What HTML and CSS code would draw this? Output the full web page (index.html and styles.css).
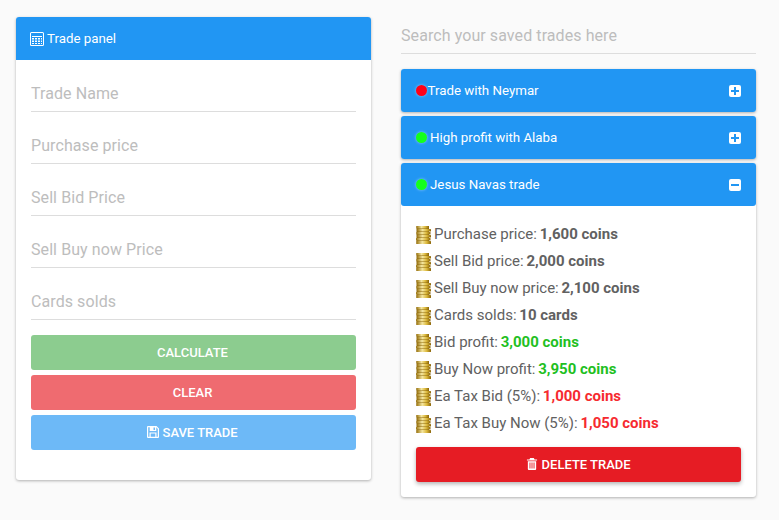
FILE: index.html
```html
<!DOCTYPE html>
<html lang="en">
<head>
    <meta charset="UTF-8">
    <meta name="viewport" content="width=device-width, initial-scale=1.0">
    <title>Trade Calculator</title>
    <link rel="stylesheet" href="styles.css">
</head>
<body>
    <svg class="defs" width="0" height="0">
        <defs>
            <linearGradient id="gold" x1="0" y1="0" x2="1" y2="0">
                <stop offset="0" stop-color="#9a7410"/>
                <stop offset="0.4" stop-color="#f4e6a0"/>
                <stop offset="0.7" stop-color="#dcb93c"/>
                <stop offset="1" stop-color="#8a6408"/>
            </linearGradient>
            <symbol id="coins" viewBox="0 0 15 18">
                <rect x="0.5" y="0" width="12.500" height="18" fill="#8f6a0c"/>
                <rect x="0.5" y="0" width="12.500" height="2.500" rx="0.5" fill="url(#gold)"/>
                <rect x="1" y="3" width="14" height="2.500" rx="0.5" fill="url(#gold)"/>
                <rect x="0.5" y="6" width="14" height="2.500" rx="0.5" fill="url(#gold)"/>
                <rect x="1" y="9" width="14" height="2.500" rx="0.5" fill="url(#gold)"/>
                <rect x="0" y="12" width="14.500" height="2.500" rx="0.5" fill="url(#gold)"/>
                <rect x="0.5" y="15" width="14.500" height="3" rx="0.5" fill="url(#gold)"/>
            </symbol>
        </defs>
    </svg>

    <div class="page">
        <!-- Left column: calculator -->
        <div class="card">
            <div class="card-header">
                <svg class="icon" viewBox="0 0 14 14">
                    <path fill="currentColor" fill-rule="evenodd" d="M1.500 0h11A1.500 1.500 0 0 1 14 1.500v11a1.500 1.500 0 0 1-1.500 1.500h-11A1.500 1.500 0 0 1 0 12.500v-11A1.500 1.500 0 0 1 1.500 0zM1.500 1a.5.5 0 0 0-.5.5v11a.5.5 0 0 0 .5.5h11a.5.5 0 0 0 .5-.5v-11a.5.5 0 0 0-.5-.5z"/>
                    <path fill="currentColor" d="M2 4h10v1H2zM2 6h2v1.500H2zM5 6h2v1.500H5zM8 6h2v1.500H8zM11 6h1v1.500h-1zM2 8.500h2V10H2zM5 8.500h2V10H5zM8 8.500h2V10H8zM11 8.500h1V10h-1zM2 11h2v1H2zM5 11h2v1H5zM8 11h2v1H8zM11 11h1v1h-1z"/>
                </svg>
                <span>Trade panel</span>
            </div>
            <div class="card-body">
                <input class="field" type="text" placeholder="Trade Name">
                <input class="field" type="text" placeholder="Purchase price">
                <input class="field" type="text" placeholder="Sell Bid Price">
                <input class="field" type="text" placeholder="Sell Buy now Price">
                <input class="field" type="text" placeholder="Cards solds">
                <div class="actions">
                    <button class="btn btn-green">CALCULATE</button>
                    <button class="btn btn-red">CLEAR</button>
                    <button class="btn btn-blue">
                        <svg class="icon-sm" viewBox="0 0 12 12">
                            <path fill="currentColor" fill-rule="evenodd" d="M1 0h8.500L12 2.500V11a1 1 0 0 1-1 1H1a1 1 0 0 1-1-1V1a1 1 0 0 1 1-1zM1.200 1.200v9.600h1.300V6.500h7v4.300h1.300V3L9.300 1.200V5H2.700V1.200zM3.700 7.500v3.300h4.600V7.500zM6.500 1.500h1.500V4H6.500z"/>
                        </svg>
                        SAVE TRADE
                    </button>
                </div>
            </div>
        </div>

        <!-- Right column: saved trades -->
        <div class="saved">
            <input class="field search" type="text" placeholder="Search your saved trades here">

            <div class="trade">
                <div class="trade-header">
                    <span class="dot dot-red"></span>
                    <span class="trade-name tight">Trade with Neymar</span>
                    <span class="toggle"><span class="bar-h"></span><span class="bar-v"></span></span>
                </div>
            </div>
            <div class="trade">
                <div class="trade-header">
                    <span class="dot dot-green"></span>
                    <span class="trade-name">High profit with Alaba</span>
                    <span class="toggle"><span class="bar-h"></span><span class="bar-v"></span></span>
                </div>
            </div>
            <div class="trade">
                <div class="trade-header">
                    <span class="dot dot-green"></span>
                    <span class="trade-name">Jesus Navas trade</span>
                    <span class="toggle"><span class="bar-h"></span></span>
                </div>
                <div class="trade-body">
                    <ul class="stats">
                        <li><svg class="coin"><use href="#coins"/></svg>Purchase price: <b>1,600 coins</b></li>
                        <li><svg class="coin"><use href="#coins"/></svg>Sell Bid price: <b>2,000 coins</b></li>
                        <li><svg class="coin"><use href="#coins"/></svg>Sell Buy now price: <b>2,100 coins</b></li>
                        <li><svg class="coin"><use href="#coins"/></svg>Cards solds: <b>10 cards</b></li>
                        <li><svg class="coin"><use href="#coins"/></svg>Bid profit: <b class="pos">3,000 coins</b></li>
                        <li><svg class="coin"><use href="#coins"/></svg>Buy Now profit: <b class="pos">3,950 coins</b></li>
                        <li><svg class="coin"><use href="#coins"/></svg>Ea Tax Bid (5%): <b class="neg">1,000 coins</b></li>
                        <li><svg class="coin"><use href="#coins"/></svg>Ea Tax Buy Now (5%): <b class="neg">1,050 coins</b></li>
                    </ul>
                    <button class="btn btn-delete">
                        <svg class="icon-sm" viewBox="0 0 11 13">
                            <path fill="currentColor" fill-rule="evenodd" d="M3.500 0h4l.8 1.500H11v1.200H0V1.500h2.700zM1 3.500h9V12a1 1 0 0 1-1 1H2a1 1 0 0 1-1-1zM2.800 5v6.500h1V5zM5 5v6.500h1V5zM7.200 5v6.500h1V5z"/>
                        </svg>
                        DELETE TRADE
                    </button>
                </div>
            </div>
        </div>
    </div>
</body>
</html>
```

FILE: styles.css
```css
body {
    margin: 0;
    background-color: #fafafa;
    font-family: Roboto, sans-serif;
    color: #616161;
}

.defs {
    display: block;
    height: 0;
}

.page {
    display: grid;
    grid-template-columns: 355px 355px;
    column-gap: 30px;
    align-items: start;
    padding: 17px 16px;
}

.card {
    background-color: white;
    border-radius: 3px;
    box-shadow: 0 1px 3px rgba(0, 0, 0, 0.3);
}

.card-header {
    display: flex;
    align-items: center;
    gap: 3px;
    height: 43px;
    padding: 0 14px;
    background-color: #2196f3;
    border-radius: 3px 3px 0 0;
    color: white;
    font-size: 13.3px;
}

.icon {
    width: 14px;
    height: 14px;
}

.icon-sm {
    width: 12px;
    height: 12px;
    vertical-align: -1px;
}

.card-body {
    padding: 15px 15px 30px;
}

.field {
    display: block;
    box-sizing: border-box;
    width: 100%;
    height: 37px;
    margin-bottom: 15px;
    padding: 0;
    border: none;
    border-bottom: 1px solid #ddd;
    background: none;
    font-family: Roboto, sans-serif;
    font-size: 16px;
    letter-spacing: 0.08px;
    outline: none;
}

.field::placeholder {
    color: #bdbdbd;
    opacity: 1;
}

.actions {
    display: flex;
    flex-direction: column;
    gap: 5px;
}

.btn {
    display: block;
    width: 100%;
    height: 35px;
    padding: 0 2px 0 0;
    border: none;
    border-radius: 3px;
    color: white;
    font-family: Roboto, sans-serif;
    font-size: 13px;
    font-weight: 500;
}

.btn-green {
    background-color: #8ccc8f;
}

.btn-red {
    background-color: #ef6b70;
}

.btn-blue {
    background-color: #6db9f7;
}

.saved {
    display: flex;
    flex-direction: column;
    gap: 4px;
}

.search {
    margin-bottom: 11px;
}

.trade {
    border-radius: 3px;
    background-color: white;
    box-shadow: 0 1px 3px rgba(0, 0, 0, 0.3);
}

.trade-header {
    display: flex;
    align-items: center;
    height: 43px;
    padding: 0 15px 0 14.5px;
    background-color: #2196f3;
    border-radius: 3px;
    color: white;
    font-size: 13.3px;
}

.dot {
    width: 11px;
    height: 11px;
    border-radius: 50%;
    box-shadow: 0 0 3px rgba(255, 255, 255, 0.5);
}

.dot-red {
    background-color: #ff0018;
}

.dot-green {
    background-color: #14ff1c;
}

.trade-name {
    flex: 1;
    margin-left: 3.5px;
}

.trade-name.tight {
    margin-left: 1px;
}

.toggle {
    position: relative;
    width: 12px;
    height: 12px;
    background-color: white;
    border-radius: 2px;
}

.bar-h,
.bar-v {
    position: absolute;
    background-color: #2196f3;
}

.bar-h {
    left: 2px;
    right: 2px;
    top: 5px;
    height: 2px;
}

.bar-v {
    top: 2px;
    bottom: 2px;
    left: 5px;
    width: 2px;
}

.trade-body {
    padding: 15px 15px 15px;
}

.stats {
    margin: 0 0 10px;
    padding: 0;
    list-style: none;
    font-size: 15px;
}

.stats li {
    height: 27px;
    line-height: 27px;
    white-space: nowrap;
}

.coin {
    width: 15px;
    height: 18px;
    margin-right: 3px;
    vertical-align: -5px;
}

b {
    margin-left: -1px;
    font-weight: 700;
}

.pos {
    color: #1fc01f;
}

.neg {
    color: #f62a2f;
}

.btn-delete {
    padding: 0;
    background-color: #e61c24;
    box-shadow: 0 2px 4px rgba(0, 0, 0, 0.3);
}
```
